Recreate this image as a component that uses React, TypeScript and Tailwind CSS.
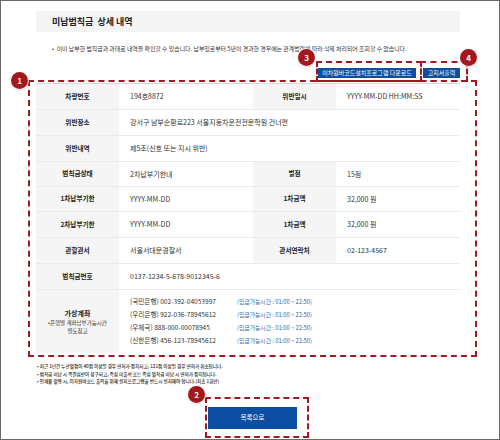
import React from 'react';

type Row = {
  label: string;
  value: string;
  label2?: string;
  value2?: string;
  h: string;
};

const rows: Row[] = [
  { label: '차량번호', value: '194호8872', label2: '위반일시', value2: 'YYYY-MM-DD HH:MM:SS', h: 'h-[26px]' },
  { label: '위반장소', value: '강서구 남부순환로223 서울지동차운전전문학원 건너편', h: 'h-[26px]' },
  { label: '위반내역', value: '제5조(신호 또는 지시 위반)', h: 'h-[26px]' },
  { label: '범칙금상태', value: '2차납부기한내', label2: '벌점', value2: '15점', h: 'h-[25px]' },
  { label: '1차납부기한', value: 'YYYY-MM-DD', label2: '1차금액', value2: '32,000 원', h: 'h-[25px]' },
  { label: '2차납부기한', value: 'YYYY-MM-DD', label2: '1차금액', value2: '32,000 원', h: 'h-[26px]' },
  { label: '관할관서', value: '서울서대문경찰서', label2: '관서연락처', value2: '02-123-4567', h: 'h-[26px]' },
  { label: '범칙금번호', value: '0137-1234-5-678-9012345-6', h: 'h-[26px]' },
];

const accounts = [
  '(국민은행) 002-392-04053997',
  '(우리은행) 922-036-78945612',
  '(우체국) 888-000-00078945',
  '(신한은행) 456-123-78945612',
];

function Badge({ n, className }: { n: string; className: string }) {
  return (
    <div
      className={`absolute w-[17px] h-[17px] rounded-full bg-[#a3181c] text-white text-[8px] font-bold flex items-center justify-center shadow-[0_0_0_1px_rgba(255,255,255,0.9),0_1px_2px_rgba(0,0,0,0.35)] ${className}`}
    >
      {n}
    </div>
  );
}

export default function App() {
  return (
    <div className="relative w-[500px] h-[440px] overflow-hidden border border-[#6a6a6a] bg-white text-[#333] font-['Noto_Sans_CJK_KR','Noto_Sans',sans-serif]">
      <div className="ml-[35px] w-[424px]">
        {/* Title bar */}
        <div className="mt-[10px] h-[21px] bg-[#f4f4f4] flex items-center pl-[16px] text-[9px] font-bold text-[#222]">
          미납범칙금&nbsp; 상세 내역
        </div>

        {/* Notice */}
        <p className="mt-[12px] pl-[16px] text-[5.9px] leading-[10px] text-[#333] whitespace-nowrap">
          • &nbsp;이미 납부한 범칙금과 과태료 내역을 확인할 수 있습니다. 납부일로부터 5년이 경과한 경우에는 관계법령에 따라 삭제 처리되어 조회할 수 없습니다.
        </p>

        {/* Action buttons */}
        <div className="mt-[14px] flex justify-end gap-[7px]">
          <button className="h-[10px] w-[98px] bg-[#0d4f9e] text-white text-[6px] leading-[10px] whitespace-nowrap">
            이차원바코드설치프로그램 다운로드
          </button>
          <button className="h-[10px] w-[37px] bg-[#0d4f9e] text-white text-[6px] leading-[10px] whitespace-nowrap">
            고지서출력
          </button>
        </div>

        {/* Detail table */}
        <div className="mt-[5px] border-t border-[#d8d8d8] text-[7px]">
          {rows.map((row) => (
            <div
              key={row.label + row.value}
              className={`grid grid-cols-[83px_134px_83px_1fr] border-b border-[#eaeaea] ${row.h}`}
            >
              <div className="bg-[#f5f5f5] flex items-center justify-center font-bold text-[6.6px] text-[#222]">{row.label}</div>
              {row.label2 ? (
                <>
                  <div className="flex items-center pl-[11px] whitespace-nowrap">{row.value}</div>
                  <div className="bg-[#f5f5f5] flex items-center justify-center font-bold text-[6.6px] text-[#222]">{row.label2}</div>
                  <div className="flex items-center pl-[11px] whitespace-nowrap">{row.value2}</div>
                </>
              ) : (
                <div className="col-span-3 flex items-center pl-[11px] whitespace-nowrap">{row.value}</div>
              )}
            </div>
          ))}

          {/* Virtual accounts */}
          <div className="grid grid-cols-[83px_1fr] h-[63px]">
            <div className="bg-[#f5f5f5] flex flex-col items-center justify-center text-center">
              <span className="font-bold text-[7px] leading-[10px] text-[#222]">가상계좌</span>
              <span className="text-[5.5px] leading-[8px] mt-[1px]">•은행별 계좌납부가능시간</span>
              <span className="text-[5.5px] leading-[8px]">별도참고</span>
            </div>
            <div className="flex flex-col justify-center pl-[11px]">
              {accounts.map((a) => (
                <div key={a} className="flex h-[13px] items-center">
                  <span className="w-[107px] whitespace-nowrap text-[6.6px]">{a}</span>
                  <span className="text-[#2f67ac] text-[5.8px] whitespace-nowrap">(입금가능시간 : 01:00 ~ 22:50)</span>
                </div>
              ))}
            </div>
          </div>
        </div>

        {/* Footnotes */}
        <ul className="mt-[10px] pl-[1px] text-[4.6px] leading-[7.7px] font-medium text-[#222]">
          <li>• 최근 1년간 누산벌점이 40점 이상일 경우 면허가 정지되고, 121점 이상일 경우 면허가 취소됩니다.</li>
          <li>• 범칙금 미납 시 즉결심판이 청구되고, 즉심 미출석 또는 즉심 벌칙금 미납 시 면허가 정지됩니다.</li>
          <li>• 인쇄물 발행 시, 이차원바코드 출력을 위해 설치프로그램을 반드시 설치해야 합니다.(최초 1회만)</li>
        </ul>

        {/* Back to list */}
        <button className="mt-[21px] ml-[172px] w-[89px] h-[22px] bg-[#0b4ea2] text-white text-[6.5px]">
          목록으로
        </button>
      </div>

      {/* Annotation boxes */}
      <div className="absolute left-[27px] top-[79px] w-[449px] h-[277px] border-2 border-dashed border-[#9e1b1f]" />
      <div className="absolute left-[315px] top-[60px] w-[106px] h-[21px] border-2 border-dashed border-[#9e1b1f]" />
      <div className="absolute left-[419px] top-[60px] w-[48px] h-[21px] border-2 border-dashed border-[#9e1b1f]" />
      <div className="absolute left-[204px] top-[396px] w-[104px] h-[41px] border-2 border-dashed border-[#9e1b1f]" />

      <Badge n="1" className="left-[10px] top-[71px]" />
      <Badge n="2" className="left-[187px] top-[385px]" />
      <Badge n="3" className="left-[297px] top-[48px]" />
      <Badge n="4" className="left-[459px] top-[48px]" />
    </div>
  );
}
